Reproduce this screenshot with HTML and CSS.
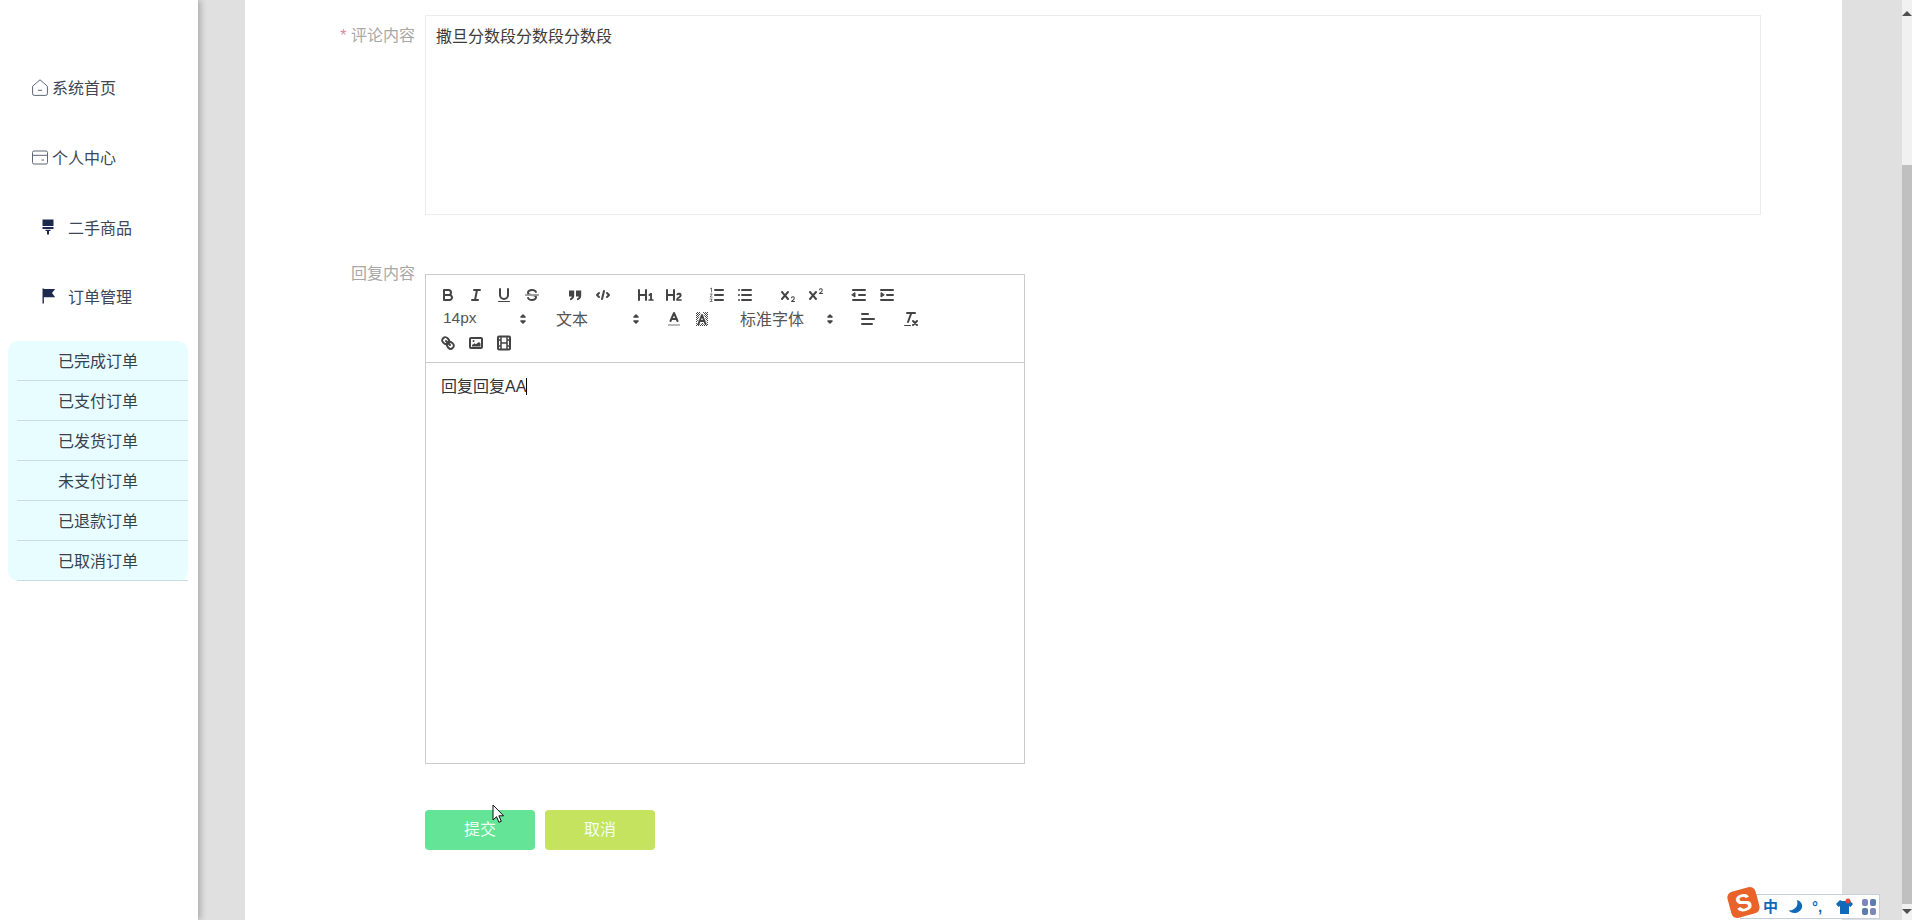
FILE: index.html
```html
<!DOCTYPE html>
<html lang="zh">
<head>
<meta charset="utf-8">
<title>评论回复</title>
<link rel="stylesheet" href="styles.css">
</head>
<body>
<aside class="sidebar">
  <nav class="nav">
    <a class="nav-item">
      <svg class="nav-icon" viewBox="0 0 16 17"><path class="outline" d="M.6 7.200 8 .8l7.400 6.400v7.600a1.600 1.600 0 0 1-1.600 1.600H2.200a1.600 1.600 0 0 1-1.600-1.600Z"/><path class="outline" d="M6 11q2 1.200 4 0"/></svg>
      <span>系统首页</span>
    </a>
    <a class="nav-item">
      <svg class="nav-icon" viewBox="0 0 16 16"><rect class="outline" x=".5" y="1.500" width="15" height="13" rx="1.500"/><path class="outline" d="M.5 5.800h15M9.500 10.500h2.500"/></svg>
      <span>个人中心</span>
    </a>
    <a class="nav-item nav-item-sub">
      <svg class="nav-icon-solid" viewBox="0 0 14 16"><path d="M.5.500h11V7H.5ZM.5 8h11v2H.5ZM3.500 10.800h5V12H7v3.500H5V12H3.500Z"/></svg>
      <span>二手商品</span>
    </a>
    <a class="nav-item nav-item-sub">
      <svg class="nav-icon-solid" viewBox="0 0 14 16"><path d="M.5.500h1.400v15H.5ZM1.900 1h11.300L10 5l3.200 4.200H1.900Z"/></svg>
      <span>订单管理</span>
    </a>
  </nav>
  <ul class="submenu">
    <li>已完成订单</li>
    <li>已支付订单</li>
    <li>已发货订单</li>
    <li>未支付订单</li>
    <li>已退款订单</li>
    <li>已取消订单</li>
  </ul>
</aside>

<main class="content">
  <form class="panel">
    <div class="field field-comment">
      <label class="field-label"><span class="required">*</span> 评论内容</label>
      <div class="comment-box">撒旦分数段分数段分数段</div>
    </div>

    <div class="field field-reply">
      <label class="field-label">回复内容</label>
      <div class="editor">
        <div class="toolbar">
          <div class="tool-row">
            <div class="tool-group">
              <svg class="tool" viewBox="0 0 18 18"><path class="st" d="M5,4H9.500A2.500,2.500,0,0,1,12,6.500v0A2.500,2.500,0,0,1,9.500,9H5V4Z"/><path class="st" d="M5,9h5.500A2.500,2.500,0,0,1,13,11.500v0A2.500,2.500,0,0,1,10.500,14H5V9Z"/></svg>
              <svg class="tool" viewBox="0 0 18 18"><path class="st" d="M7 4h6M5 14h6M8 14l2-10"/></svg>
              <svg class="tool" viewBox="0 0 18 18"><path class="st" d="M5,3V9a4,4,0,0,0,4,4H9a4,4,0,0,0,4-4V3"/><rect class="fl" x="3" y="15" width="12" height="1" rx=".5"/></svg>
              <svg class="tool" viewBox="0 0 18 18"><path class="st thin" d="M2.500 9h13"/><path class="fl" d="M9.007,8C6.542,7.791,6,7.519,6,6.500,6,5.792,7.283,5,9,5c1.571,0,2.765.679,2.969,1.309a1,1,0,0,0,1.900-.617C13.356,4.106,11.354,3,9,3,6.200,3,4,4.538,4,6.500a3.200,3.200,0,0,0,.5,1.843Z"/><path class="fl" d="M8.984,10C11.457,10.208,12,10.479,12,11.500c0,.708-1.283,1.500-3,1.500-1.571,0-2.765-.679-2.969-1.309a1,1,0,1,0-1.900.617C4.644,13.894,6.646,15,9,15c2.800,0,5-1.538,5-3.500a3.200,3.200,0,0,0-.5-1.843Z"/></svg>
            </div>
            <div class="tool-group">
              <svg class="tool" viewBox="0 0 18 18"><path class="fl" d="M3 4.500h5.200v5c0 2.800-1.700 4.500-4.200 4.800v-1.700c1-.2 1.700-.9 1.800-2H3ZM10 4.500h5.200v5c0 2.800-1.700 4.500-4.200 4.800v-1.700c1-.2 1.700-.9 1.800-2H10Z"/></svg>
              <svg class="tool" viewBox="0 0 18 18"><path class="st" d="M5 7 3 9l2 2M13 7l2 2-2 2M10 5l-2 8"/></svg>
            </div>
            <div class="tool-group">
              <svg class="tool" viewBox="0 0 18 18"><path class="fl" d="M10,4V14a1,1,0,0,1-2,0V10H3v4a1,1,0,0,1-2,0V4A1,1,0,0,1,3,4V8H8V4a1,1,0,0,1,2,0Zm6.068,9.209H14.990V7.599a.541.541,0,0,0-.605-.605h-.627a1.011,1.011,0,0,0-.748.297L11.645,8.566a.544.544,0,0,0-.022.858l.286.308a.539.539,0,0,0,.847.033l.099-.088a1.214,1.214,0,0,0,.242-.353h.022s-.011.309-.011.605V13.209H12.041a.541.541,0,0,0-.605.605v.439a.541.541,0,0,0,.605.605h4.027a.541.541,0,0,0,.605-.605v-.439A.541.541,0,0,0,16.068,13.209Z"/></svg>
              <svg class="tool" viewBox="0 0 18 18"><path class="fl" d="M16.740,13.814v.439a.541.541,0,0,1-.605.605H11.855a.584.584,0,0,1-.649-.605V14.013c0-2.905,3.399-3.422,3.399-4.555a.777.777,0,0,0-.847-.781,1.177,1.177,0,0,0-.836.385c-.275.264-.561.374-.858.132l-.429-.341c-.308-.242-.385-.518-.154-.814a2.972,2.972,0,0,1,2.454-1.177,2.454,2.454,0,0,1,2.684,2.409c0,2.453-3.179,2.927-3.278,3.938h2.794A.541.541,0,0,1,16.740,13.814ZM9,3A1,1,0,0,0,8,4V8H3V4A1,1,0,0,0,1,4V14a1,1,0,0,0,2,0V10H8v4a1,1,0,0,0,2,0V4A1,1,0,0,0,9,3Z"/></svg>
            </div>
            <div class="tool-group">
              <svg class="tool" viewBox="0 0 18 18"><path class="st" d="M7 4h8M7 9h8M7 14h8"/><path class="st hair" d="M2.500 2.600 3.500 2v4M2.200 8h2L2.200 11h2M2.200 13h2l-1 1 1 1.500H2.200"/></svg>
              <svg class="tool" viewBox="0 0 18 18"><path class="st" d="M6 4h9M6 9h9M6 14h9M3 4h0M3 9h0M3 14h0"/></svg>
            </div>
            <div class="tool-group">
              <svg class="tool" viewBox="0 0 18 18"><path class="fl" d="M15.500,15H13.861a3.858,3.858,0,0,0,1.914-2.975,1.800,1.800,0,0,0-1.600-1.751A1.921,1.921,0,0,0,12.021,11.700a.5.500,0,1,0,.957.291.914.914,0,0,1,1.053-.725.810.810,0,0,1,.744.762c0,1.076-1.170,1.870-1.940,2.431A1.456,1.456,0,0,0,12,15.500a.5.500,0,0,0,.5.500h3A.5.500,0,0,0,15.500,15Z"/><path class="fl" d="M9.650,5.241a1,1,0,0,0-1.409.108L6,7.964,3.759,5.349A1,1,0,0,0,2.241,6.651L4.684,9.500,2.241,12.350a1,1,0,0,0,1.518,1.300L6,11.036l2.241,2.614a1,1,0,1,0,1.518-1.300L7.316,9.500,9.759,6.651A1,1,0,0,0,9.650,5.241Z"/></svg>
              <svg class="tool" viewBox="0 0 18 18"><path class="fl" d="M15.500,7H13.861a4.015,4.015,0,0,0,1.914-2.975,1.800,1.800,0,0,0-1.600-1.751A1.922,1.922,0,0,0,12.021,3.700a.5.500,0,1,0,.957.291.917.917,0,0,1,1.053-.725.810.810,0,0,1,.744.762c0,1.077-1.164,1.925-1.934,2.486A1.423,1.423,0,0,0,12,7.500a.5.500,0,0,0,.5.500h3A.5.500,0,0,0,15.500,7Z"/><path class="fl" d="M9.651,5.241a1,1,0,0,0-1.410.108L6,7.964,3.759,5.349a1,1,0,1,0-1.519,1.300L4.683,9.500,2.241,12.350a1,1,0,1,0,1.519,1.300L6,11.036l2.241,2.615a1,1,0,0,0,1.519-1.300L7.317,9.500,9.759,6.651A1,1,0,0,0,9.651,5.241Z"/></svg>
            </div>
            <div class="tool-group">
              <svg class="tool" viewBox="0 0 18 18"><path class="st" d="M3 14h12M3 4h12M9 9h6"/><path class="fl st thin" d="M5 7v4L2 9Z"/></svg>
              <svg class="tool" viewBox="0 0 18 18"><path class="st" d="M3 14h12M3 4h12M9 9h6"/><path class="fl st thin" d="M3 7v4l3-2Z"/></svg>
            </div>
          </div>
          <div class="tool-row">
            <div class="picker picker-size"><span class="picker-latin">14px</span><svg class="picker-arrow" viewBox="0 0 18 18"><path class="fl st" d="M7 11l2 2 2-2ZM7 7l2-2 2 2Z"/></svg></div>
            <div class="picker picker-size"><span>文本</span><svg class="picker-arrow" viewBox="0 0 18 18"><path class="fl st" d="M7 11l2 2 2-2ZM7 7l2-2 2 2Z"/></svg></div>
            <div class="tool-group">
              <svg class="tool" viewBox="0 0 18 18"><path class="underbar" d="M3 15h12"/><path class="st" d="M5.500 11 9 3l3.500 8M11.630 9H6.380"/></svg>
              <svg class="tool" viewBox="0 0 18 18"><defs><pattern id="hatch" width="2" height="2" patternUnits="userSpaceOnUse"><rect width="1" height="1" fill="#444"/><rect x="1" y="1" width="1" height="1" fill="#444"/></pattern></defs><rect x="3" y="2" width="12" height="14" fill="url(#hatch)"/><path class="halo" d="M5.500 14 9 5l3.500 9M11.630 11H6.380"/><path class="st" d="M5.500 14 9 5l3.500 9M11.630 11H6.380"/></svg>
            </div>
            <div class="picker picker-font"><span>标准字体</span><svg class="picker-arrow" viewBox="0 0 18 18"><path class="fl st" d="M7 11l2 2 2-2ZM7 7l2-2 2 2Z"/></svg></div>
            <div class="tool-group">
              <svg class="tool" viewBox="0 0 18 18"><path class="st" d="M3 9h12M3 14h10M3 4h6"/></svg>
            </div>
            <div class="tool-group">
              <svg class="tool" viewBox="0 0 18 18"><path class="st" d="M5 3h8M6 12 9.350 3M11 11l4 4M15 11l-4 4"/><rect class="fl" x="2" y="15" width="7" height="1" rx=".5"/></svg>
            </div>
          </div>
          <div class="tool-row">
            <div class="tool-group">
              <svg class="tool" viewBox="0 0 18 18"><path class="st" d="M7 7l4 4"/><path class="st" d="M8.900,4.577a3.476,3.476,0,0,1,.36,4.679A3.476,3.476,0,0,1,4.577,8.900C3.185,7.500,2.035,6.400,4.217,4.217S7.500,3.185,8.900,4.577Z"/><path class="st" d="M13.423,9.100a3.476,3.476,0,0,0-4.679-.36,3.476,3.476,0,0,0,.36,4.679c1.392,1.392,2.500,2.542,4.679.36S14.815,10.500,13.423,9.100Z"/></svg>
              <svg class="tool" viewBox="0 0 18 18"><rect class="st" x="3" y="4" width="12" height="10" rx="1"/><circle class="fl" cx="6.500" cy="7" r="1"/><path class="fl" d="M5 12.500V11l2.500-1.800 1.300 1L12 8l1.500 1.500v3Z"/></svg>
              <svg class="tool" viewBox="0 0 18 18"><rect class="st" x="3" y="2.500" width="12" height="13" rx="1"/><path class="st film" d="M6 2.500v13M12 2.500v13M6 9h6M3 6h3M3 12h3M12 6h3M12 12h3"/></svg>
            </div>
          </div>
        </div>
        <div class="editor-body"><span class="editor-text">回复回复AA</span></div>
      </div>
    </div>

    <div class="actions">
      <button type="button" class="btn btn-submit">提交</button>
      <button type="button" class="btn btn-cancel">取消</button>
    </div>
  </form>
</main>

<div class="scrollbar">
  <span class="scroll-arrow scroll-up"></span>
  <span class="scroll-thumb"></span>
  <span class="scroll-arrow scroll-down"></span>
</div>

<svg class="mouse-cursor" viewBox="0 0 13 20"><path d="M1 1v15l3.500-3.300 2.400 5.600 2.400-1-2.400-5.500h4.700Z" fill="#fff" stroke="#111" stroke-width="1"/></svg>

<div class="ime">
  <span class="ime-logo">S</span>
  <span class="ime-zh">中</span>
  <svg class="ime-icon ime-moon" viewBox="0 0 18 18"><path d="M11 1c2 5 0 11-9 12 3 4.500 13 4 15-4 .7-3.500-2-7-6-8Z"/></svg>
  <span class="ime-punct">°,</span>
  <svg class="ime-icon ime-shirt" viewBox="0 0 18 18"><path d="M5 2 1 6l2.500 3L5 8v8h9V8l1.500 1L18 6l-4-4-2 1H7Z"/><circle class="ime-dot" cx="13" cy="3" r="2.500"/></svg>
  <svg class="ime-icon ime-grid" viewBox="0 0 14 16"><rect class="ime-a" x="0" y="0" width="6" height="7" rx="2"/><rect class="ime-b" x="8" y="0" width="6" height="7" rx="2"/><rect class="ime-b" x="0" y="9" width="6" height="7" rx="2"/><rect class="ime-a" x="8" y="9" width="6" height="7" rx="2"/></svg>
</div>
</body>
</html>
```
FILE: styles.css
```css
* { box-sizing: border-box; }

html, body {
  margin: 0;
  height: 920px;
  overflow: hidden;
}

body {
  display: flex;
  position: relative;
  background: #e0e0e0;
  font-family: "Liberation Sans", "Noto Sans CJK SC", sans-serif;
  font-size: 16px;
}

/* sidebar */
.sidebar {
  width: 198px;
  flex: none;
  height: 920px;
  background: #fff;
  padding-top: 52px;
  box-shadow: 3px 0 6px rgba(0, 0, 0, .22);
  position: relative;
  z-index: 1;
}

.nav-item {
  display: flex;
  align-items: center;
  height: 70px;
  padding-left: 32px;
  gap: 4px;
  color: #3d4757;
}

.nav-item-sub {
  height: 69.500px;
  padding-left: 42px;
  gap: 12px;
}

.nav-icon { width: 16px; height: 17px; flex: none; }
.nav-icon-solid { width: 14px; height: 16px; flex: none; fill: #1d2a4d; }

.outline {
  fill: none;
  stroke: #5d6674;
  stroke-width: 1;
}

.submenu {
  list-style: none;
  margin: 10px 10px 0 8px;
  padding: 0;
  background: #e8fdff;
  border-radius: 10px;
  color: #38424f;
}

.submenu li {
  height: 40px;
  margin-left: 9px;
  padding-right: 9px;
  line-height: 42px;
  text-align: center;
  border-bottom: 1px solid #c5dde3;
}

/* content */
.content {
  flex: none;
  width: 1704px;
  padding-left: 47px;
  padding-right: 60px;
}

.panel {
  background: #fff;
  height: 920px;
  padding-top: 15px;
}

.field {
  display: grid;
  grid-template-columns: 170px auto;
  column-gap: 10px;
  align-items: start;
  justify-content: start;
}

.field-comment { margin-bottom: 59px; }

.field-label {
  text-align: right;
  color: #a8a8a8;
  line-height: 22px;
}

.field-comment .field-label { padding-top: 10px; }
.field-reply .field-label { margin-top: -11px; }

.required { color: #d88a9d; }

.comment-box {
  width: 1336px;
  height: 200px;
  padding: 10px;
  border: 1px solid #ececec;
  color: #3c3c3c;
  line-height: 22px;
}

.editor {
  width: 600px;
  height: 490px;
  border: 1px solid #ccc;
  background: #fff;
}

.toolbar {
  padding: 8px;
  height: 88px;
  border-bottom: 1px solid #ccc;
}

.tool-row {
  display: flex;
  height: 24px;
}

.tool-group {
  display: flex;
  margin-right: 15px;
}

.tool {
  width: 28px;
  height: 24px;
  padding: 3px 5px;
  flex: none;
}

.st {
  fill: none;
  stroke: #444;
  stroke-width: 2;
  stroke-linecap: round;
  stroke-linejoin: round;
}

.thin { stroke-width: 1; }
.hair { stroke-width: .7; }
.film { stroke-width: 1.500; stroke-linecap: butt; }
.fl { fill: #444; }
.fl.st { fill: #444; }
.picker-arrow .st { stroke-width: 1.600; }
.underbar { stroke: #bbb; stroke-width: 2; }
.halo {
  fill: none;
  stroke: #fff;
  stroke-width: 4;
}

.picker {
  display: flex;
  align-items: center;
  justify-content: space-between;
  margin-right: 15px;
  height: 24px;
  padding: 0 0 3px 9px;
  color: #555;
  font-size: 16px;
}

.picker-latin { font-size: 15.500px; }
.picker-size { width: 98px; }
.picker-font { width: 108px; }
.picker-arrow { width: 18px; height: 18px; flex: none; margin-top: 3px; }

.editor-body {
  padding: 12px 15px;
  line-height: 23px;
  color: #333;
}

.editor-text {
  border-right: 1px solid #000;
}

.actions {
  display: flex;
  gap: 10px;
  margin: 46px 0 0 180px;
}

.btn {
  width: 110px;
  height: 40px;
  border: 0;
  border-radius: 4px;
  color: #f2fff2;
  font: inherit;
  padding: 0 0 4px;
}

.btn-submit { background: #63e496; }
.btn-cancel { background: #c5e35f; }

/* window scrollbar */
.scrollbar {
  width: 10px;
  flex: none;
  background: #f1f1f1;
  display: flex;
  flex-direction: column;
  align-items: center;
  height: 920px;
  z-index: 1;
}

.scroll-arrow {
  flex: none;
  height: 16px;
  width: 100%;
  display: flex;
  justify-content: center;
}

.scroll-up::before,
.scroll-down::before {
  content: "";
  margin-top: 5px;
  border-left: 5px solid transparent;
  border-right: 5px solid transparent;
}

.scroll-up::before { border-bottom: 5px solid #505050; }
.scroll-down::before { border-top: 5px solid #505050; }

.scroll-thumb {
  width: 100%;
  margin-top: 149px;
  flex: 1;
  background: #c0c0c0;
}

/* overlays */
.mouse-cursor {
  position: absolute;
  left: 492px;
  top: 804px;
  width: 13px;
  height: 20px;
  z-index: 3;
}

.ime {
  position: absolute;
  left: 1740px;
  bottom: 1px;
  width: 140px;
  height: 25px;
  background: #fff;
  border: 1px solid #c5d0de;
  display: flex;
  align-items: center;
  padding-left: 22px;
  gap: 9px;
  z-index: 2;
}

.ime-logo {
  position: absolute;
  left: -12px;
  top: -6px;
  width: 29px;
  height: 27px;
  background: #e8622a;
  border-radius: 6px;
  transform: rotate(-15deg);
  color: #fff;
  font: bold 24px/27px "Liberation Sans", sans-serif;
  text-align: center;
}

.ime-zh {
  color: #1268b8;
  font-size: 15px;
  font-weight: 700;
  line-height: 20px;
  width: 15px;
}

.ime-icon { fill: #1268b8; flex: none; }
.ime-moon { width: 16px; height: 16px; }
.ime-shirt { width: 18px; height: 18px; }
.ime-grid { width: 14px; height: 16px; }

.ime-punct {
  color: #1268b8;
  font-size: 15px;
  font-weight: 700;
  width: 14px;
  line-height: 20px;
}

.ime-dot { fill: #e2483a; }
.ime-a { fill: #7c89b8; }
.ime-b { fill: #5a7cae; }
```
